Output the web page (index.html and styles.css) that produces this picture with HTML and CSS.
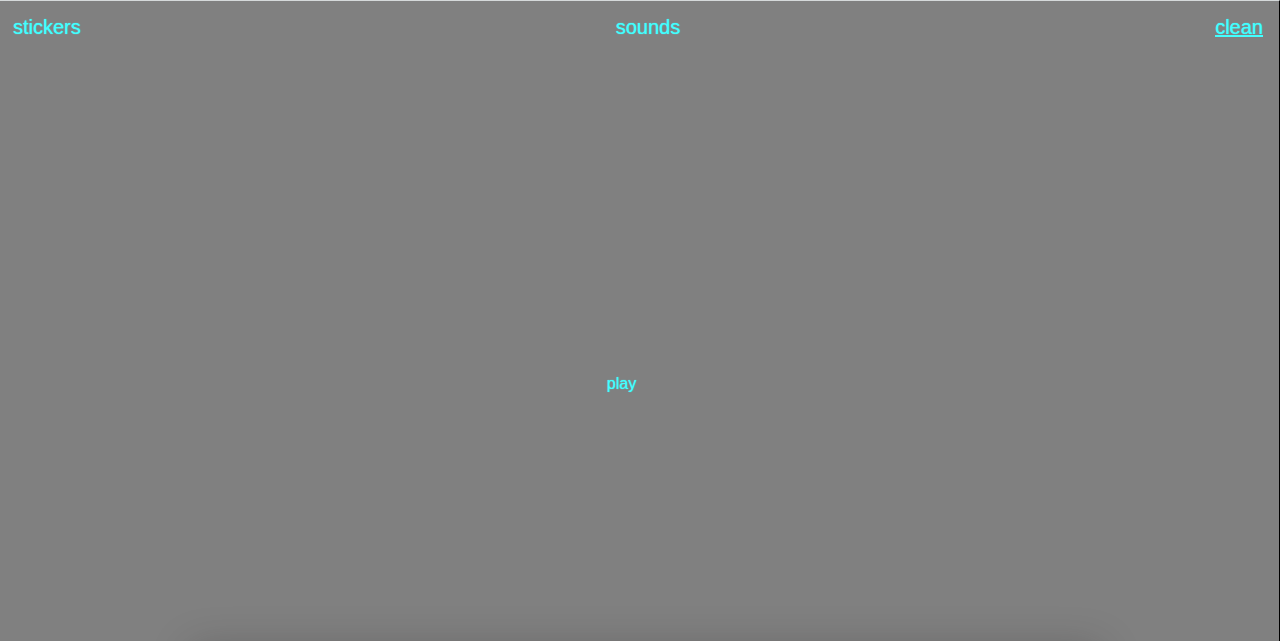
FILE: index.html
```html
<!DOCTYPE html>
<html lang="en">
<head>
<meta charset="utf-8">
<meta name="viewport" content="width=device-width, initial-scale=1">
<title>Stickers and sounds</title>
<link rel="stylesheet" href="styles.css">
</head>
<body>
<div class="page">
  <nav class="menu">
    <a class="menu-link" href="#stickers">stickers</a>
    <a class="menu-link" href="#sounds">sounds</a>
    <a class="menu-link menu-link-active" href="#clean">clean</a>
  </nav>
  <main class="stage">
    <button class="play" type="button">play</button>
  </main>
  <div class="dock-shade"></div>
</div>
</body>
</html>
```

FILE: styles.css
```css
* {
  box-sizing: border-box;
}

body {
  margin: 0;
  background: #808080;
  color: #42ffff;
  font-family: "Liberation Sans", Arial, Helvetica, sans-serif;
}

.page {
  position: relative;
  display: flex;
  flex-direction: column;
  min-height: 100vh;
  overflow: hidden;
  border-top: 1px solid #d5d9da;
  border-right: 1px solid #000;
}

.menu {
  display: flex;
  justify-content: space-between;
  padding: 14px 16px 14px 13px;
  font-size: 20px;
  line-height: 24px;
}

.menu-link {
  color: inherit;
  text-decoration: none;
  text-shadow: 0 0 1px currentColor;
}

.menu-link-active {
  text-decoration: underline;
  text-decoration-thickness: 2px;
  text-underline-offset: 1px;
}

.stage {
  display: flex;
  flex: 1;
  align-items: center;
  justify-content: center;
  padding: 74px 36px 0 0;
}

.play {
  padding: 0;
  border: 0;
  background: none;
  color: inherit;
  font: inherit;
  font-size: 16px;
  line-height: 20px;
  text-shadow: 0 0 1px currentColor;
  cursor: pointer;
}

/* Soft shade rising from the bottom edge */
.dock-shade {
  position: absolute;
  top: 100%;
  left: 15%;
  right: 14%;
  height: 80px;
  box-shadow: 0 8px 40px rgba(40, 36, 36, 0.3);
  pointer-events: none;
}
```
